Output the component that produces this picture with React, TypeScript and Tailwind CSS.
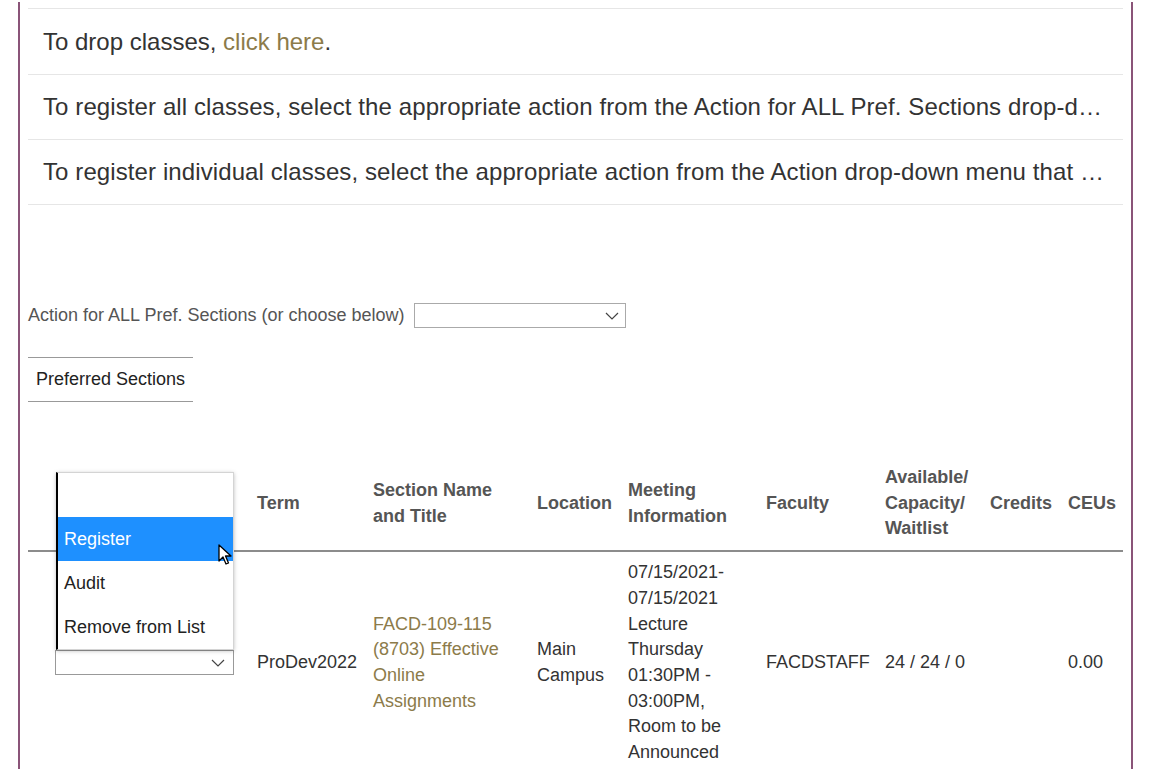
import React from "react";

const notes = [
  "To register all classes, select the appropriate action from the Action for ALL Pref. Sections drop-d…",
  "To register individual classes, select the appropriate action from the Action drop-down menu that …",
];

const meeting = [
  "07/15/2021-",
  "07/15/2021",
  "Lecture",
  "Thursday",
  "01:30PM -",
  "03:00PM,",
  "Room to be",
  "Announced",
];

function Chevron() {
  return (
    <svg width="14" height="8" viewBox="0 0 14 8" className="text-[#444]">
      <polyline points="1,1 7,7 13,1" fill="none" stroke="currentColor" strokeWidth="1.2" />
    </svg>
  );
}

function Cursor() {
  return (
    <svg width="16" height="23" viewBox="0 0 16 23" className="absolute left-[160px] top-[71px]">
      <path
        d="M1 1 L1 17 L5 13 L8 20 L10.5 19 L7.5 12 L13 12 Z"
        fill="#fff"
        stroke="#000"
        strokeWidth="1.3"
        strokeLinejoin="round"
      />
    </svg>
  );
}

function ActionSelect() {
  return (
    <div className="relative w-[179px]">
      {/* open listbox */}
      <div className="absolute bottom-full left-px w-[178px] bg-white border border-[#d4d4d4] border-l-2 border-l-black shadow-[0_1px_4px_rgba(0,0,0,0.25)] z-10">
        <div className="h-[44px]" />
        <div className="h-[44px] flex items-center pl-[6px] bg-[#1e90ff] text-white">Register</div>
        <div className="h-[44px] flex items-center pl-[6px] text-[#222]">Audit</div>
        <div className="h-[44px] flex items-center pl-[6px] text-[#222]">Remove from List</div>
        <Cursor />
      </div>
      <div className="h-[25px] border border-[#999] bg-white flex items-center justify-end pr-[8px]">
        <Chevron />
      </div>
    </div>
  );
}

export default function App() {
  return (
    <div className="min-h-screen bg-white font-['Liberation_Sans',Arial,sans-serif] text-[18px] text-[#333]">
      <div className="ml-[18px] w-[1115px] mt-[2px] border-l-2 border-r-2 border-[#8a5478] px-[8px] pt-[6px] pb-10">
        {/* instructions */}
        <div className="border-t border-[#e6e6e6] text-[24px] text-[#333]">
          <div className="h-[66px] border-b border-[#e6e6e6] flex items-center px-[15px]">
            <p>
              To drop classes, <a className="text-[#8c7b4a]">click here</a>.
            </p>
          </div>
          {notes.map((n) => (
            <div key={n} className="h-[65px] border-b border-[#e6e6e6] flex items-center pl-[15px] pr-[15px]">
              <p className="whitespace-nowrap tracking-[0.1px]">{n}</p>
            </div>
          ))}
        </div>

        {/* action for all */}
        <div className="mt-[97px] flex items-center gap-[9px] text-[#555]">
          <span>Action for ALL Pref. Sections (or choose below)</span>
          <div className="w-[212px] h-[25px] border border-[#aaa] bg-white flex items-center justify-end pr-[6px]">
            <Chevron />
          </div>
        </div>

        {/* tab */}
        <div className="mt-[28px] w-[165px] h-[45px] border-t-[1.5px] border-b-[1.5px] border-[#999] flex items-center px-[8px] whitespace-nowrap text-[#222]">
          Preferred Sections
        </div>

        {/* table */}
        <table className="mt-[55px] w-[1095px] table-fixed border-collapse leading-[25.7px]">
          <colgroup>
            <col className="w-[221px]" />
            <col className="w-[116px]" />
            <col className="w-[164px]" />
            <col className="w-[91px]" />
            <col className="w-[138px]" />
            <col className="w-[119px]" />
            <col className="w-[105px]" />
            <col className="w-[78px]" />
            <col className="w-[63px]" />
          </colgroup>
          <thead>
            <tr className="border-b-2 border-[#8c8c8c] text-left align-middle font-bold text-[#555]">
              <th className="py-2" />
              <th className="py-2 pl-2">Term</th>
              <th className="py-2 pl-2">Section Name and Title</th>
              <th className="py-2 pl-2">Location</th>
              <th className="py-2 pl-2">Meeting Information</th>
              <th className="py-2 pl-2">Faculty</th>
              <th className="py-2 pl-2">Available/ Capacity/ Waitlist</th>
              <th className="py-2 pl-2">Credits</th>
              <th className="py-2 pl-2">CEUs</th>
            </tr>
          </thead>
          <tbody>
            <tr className="align-middle text-[#333]">
              <td className="py-2 pl-[27px]">
                <ActionSelect />
              </td>
              <td className="py-2 pl-2">ProDev2022</td>
              <td className="py-2 pl-2 text-[#8c7b4a]">FACD-109-115 (8703) Effective Online Assignments</td>
              <td className="py-2 pl-2">Main Campus</td>
              <td className="py-2 pl-2">
                {meeting.map((m) => (
                  <div key={m}>{m}</div>
                ))}
              </td>
              <td className="py-2 pl-2">FACDSTAFF</td>
              <td className="py-2 pl-2">24 / 24 / 0</td>
              <td className="py-2 pl-2" />
              <td className="py-2 pl-2">0.00</td>
            </tr>
          </tbody>
        </table>
      </div>
    </div>
  );
}
